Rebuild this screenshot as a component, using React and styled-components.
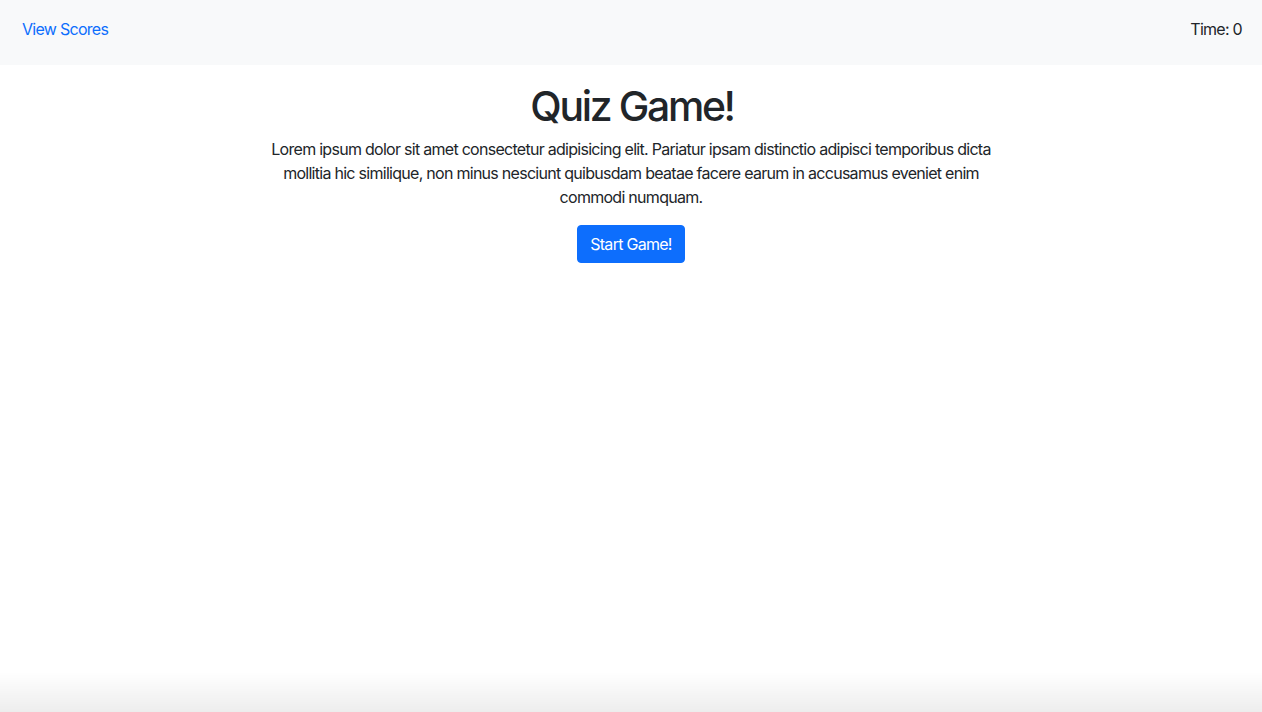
import React from "react";
import styled, { createGlobalStyle } from "styled-components";

const GlobalStyle = createGlobalStyle`
  * {
    box-sizing: border-box;
  }
  body {
    margin: 0;
    background: #fff;
    color: #212529;
    font-family: Inter, "Noto Sans", "Liberation Sans", sans-serif;
    font-size: 16px;
    line-height: 1.5;
    letter-spacing: -0.045em;
  }
`;

const App = () => {
  return (
    <>
      <GlobalStyle />
      <Header>
        <ScoresLink href="#">View Scores</ScoresLink>
        <Timer>Time: 0</Timer>
      </Header>
      <Main>
        <Title>Quiz Game!</Title>
        <Intro>
          Lorem ipsum dolor sit amet consectetur adipisicing elit. Pariatur
          ipsam distinctio adipisci temporibus dicta mollitia hic similique, non
          minus nesciunt quibusdam beatae facere earum in accusamus eveniet enim
          commodi numquam.
        </Intro>
        <StartButton>Start Game!</StartButton>
      </Main>
      <BottomShade />
    </>
  );
};

const Header = styled.header`
  height: 65px;
  padding: 17px 20px 24px 22px;
  background-color: #f8f9fa;
  display: flex;
  justify-content: space-between;
  align-items: flex-start;
  line-height: 24px;
`;

const ScoresLink = styled.a`
  color: #0d6efd;
  text-decoration: none;
  &:hover {
    text-decoration: underline;
  }
`;

const Timer = styled.span`
  color: #212529;
`;

const Main = styled.main`
  display: flex;
  flex-direction: column;
  align-items: center;
  text-align: center;
  padding-top: 17px;
`;

const Title = styled.h1`
  margin: 0 0 6px;
  padding-left: 2px;
  font-size: 40.9px;
  font-weight: 500;
  line-height: 1.2;
  letter-spacing: -0.057em;
`;

const Intro = styled.p`
  width: 730px;
  margin: 0 0 16px;
  line-height: 24px;
`;

const StartButton = styled.button`
  font-family: inherit;
  font-size: 16px;
  line-height: 24px;
  letter-spacing: inherit;
  padding: 6px 12px;
  color: #fff;
  background-color: #0d6efd;
  border: 1px solid #0d6efd;
  border-radius: 4px;
  cursor: pointer;
  &:hover {
    background-color: #0b5ed7;
  }
`;

const BottomShade = styled.div`
  position: fixed;
  left: 0;
  right: 0;
  bottom: 0;
  height: 40px;
  pointer-events: none;
  background: linear-gradient(rgba(0, 0, 0, 0), rgba(0, 0, 0, 0.07));
`;

export default App;
